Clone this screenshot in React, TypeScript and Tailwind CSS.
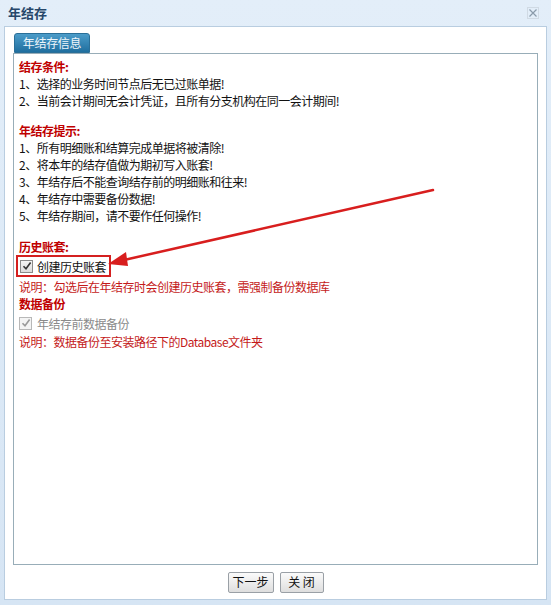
import React from 'react';

const font = { fontFamily: '"Noto Sans CJK SC", "Liberation Sans", sans-serif' };

const Check: React.FC<{ disabled?: boolean }> = ({ disabled }) => (
  <span
    className={`inline-flex items-center justify-center w-[13px] h-[13px] border ${
      disabled ? 'border-[#b8b8b8] bg-[#f4f4f4]' : 'border-[#8a8a8a] bg-gradient-to-b from-[#f4f4f4] to-[#dcdcdc]'
    }`}
  >
    <svg width="10" height="10" viewBox="0 0 10 10">
      <path d="M1.5 5.2 L4 7.8 L8.6 1.6" fill="none" stroke={disabled ? '#9a9a9a' : '#333'} strokeWidth="1.6" />
    </svg>
  </span>
);

const App: React.FC = () => {
  return (
    <div className="relative w-[551px] h-[605px] bg-gradient-to-b from-[#e3eef9] to-[#d6e5f4] flex flex-col text-[12px]" style={font}>
      {/* title bar */}
      <div className="h-[26px] flex items-center justify-between px-[8px]">
        <span className="font-bold text-[13px] text-[#27476a]">年结存</span>
        <svg width="12" height="12" viewBox="0 0 12 12" className="mr-[4px]">
          <path d="M2.5 2.5 L9.5 9.5 M9.5 2.5 L2.5 9.5" stroke="#8a9aaa" strokeWidth="1.2" />
          <rect x="0.5" y="0.5" width="11" height="11" fill="none" stroke="#d0dae4" />
        </svg>
      </div>

      {/* body */}
      <div className="flex-1 mx-[4px] mb-[5px] bg-white border border-[#b9cde0] flex flex-col">
        <div className="pl-[8px] pr-[8px] pt-[6px] flex-1 flex flex-col">
          {/* tab */}
          <div className="flex">
            <div className="h-[20px] w-[76px] ml-[1px] rounded-t-[3px] bg-gradient-to-b from-[#4b9cc9] to-[#1f6f9f] border border-[#2a6f98] text-[#eef6fb] flex items-center justify-center text-[12px] tracking-[-0.3px]">
              年结存信息
            </div>
          </div>
          <div className="flex-1 border border-[#98adb8] pl-[5px] pt-[4px] leading-[17px] text-[#111] tracking-[-0.5px]">
            <div className="font-bold text-[#c00000]">结存条件:</div>
            <div>1、选择的业务时间节点后无已过账单据!</div>
            <div>2、当前会计期间无会计凭证，且所有分支机构在同一会计期间!</div>

            <div className="font-bold text-[#c00000] mt-[13px]">年结存提示:</div>
            <div>1、所有明细账和结算完成单据将被清除!</div>
            <div>2、将本年的结存值做为期初写入账套!</div>
            <div>3、年结存后不能查询结存前的明细账和往来!</div>
            <div>4、年结存中需要备份数据!</div>
            <div>5、年结存期间，请不要作任何操作!</div>

            <div className="font-bold text-[#c00000] mt-[14px]">历史账套:</div>
            <div className="flex">
              <div className="flex items-center gap-[4px] border-2 border-[#d42020] pl-[2px] pr-[3px] h-[22px] -ml-[3px]">
                <Check />
                <span>创建历史账套</span>
              </div>
            </div>
            <div className="text-[#c41a1a] mt-[1px]">说明：勾选后在年结存时会创建历史账套，需强制备份数据库</div>
            <div className="font-bold text-[#c00000]">数据备份</div>
            <div className="flex items-center gap-[5px] h-[20px] mt-[1px] text-[#8a8a8a]">
              <Check disabled />
              <span>年结存前数据备份</span>
            </div>
            <div className="text-[#c41a1a]">说明：数据备份至安装路径下的Database文件夹</div>
          </div>
        </div>
        {/* footer */}
        <div className="h-[34px] flex items-center justify-center gap-[6px]">
          <button className="h-[21px] w-[46px] border border-[#9aa0a6] rounded-[2px] bg-gradient-to-b from-[#fbfbfb] to-[#dedede] text-[12px] text-[#111]">
            下一步
          </button>
          <button className="h-[21px] w-[44px] border border-[#9aa0a6] rounded-[2px] bg-gradient-to-b from-[#fbfbfb] to-[#dedede] text-[12px] text-[#111]">
            关 闭
          </button>
        </div>
      </div>

      {/* annotation arrow */}
      <svg className="absolute left-0 top-0 pointer-events-none" width="551" height="605">
        <line x1="433" y1="190" x2="124" y2="260" stroke="#d81e1e" strokeWidth="2.5" strokeLinecap="round" />
        <path d="M108 264 L126 252 L128 266 Z" fill="#d81e1e" />
      </svg>
    </div>
  );
};

export default App;
